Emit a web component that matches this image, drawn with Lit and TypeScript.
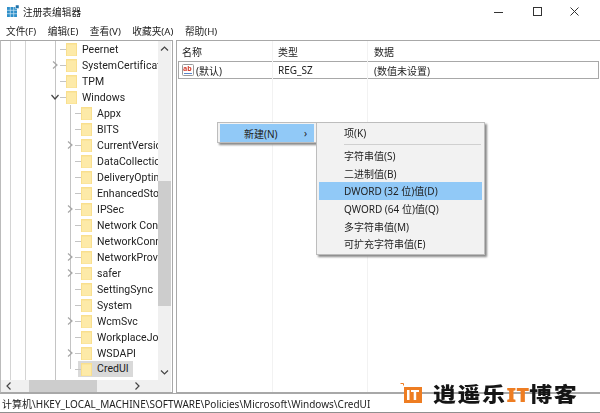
import { LitElement, html, css, svg } from "lit";
import { customElement } from "lit/decorators.js";

type Row = { t: string; lvl: number; exp?: "c" | "o"; sel?: boolean };
const rows: Row[] = [
  { t: "Peernet", lvl: 0 },
  { t: "SystemCertificates", lvl: 0, exp: "c" },
  { t: "TPM", lvl: 0 },
  { t: "Windows", lvl: 0, exp: "o" },
  { t: "Appx", lvl: 1 },
  { t: "BITS", lvl: 1 },
  { t: "CurrentVersion", lvl: 1, exp: "c" },
  { t: "DataCollection", lvl: 1 },
  { t: "DeliveryOptimization", lvl: 1 },
  { t: "EnhancedStorage", lvl: 1 },
  { t: "IPSec", lvl: 1, exp: "c" },
  { t: "Network Connections", lvl: 1 },
  { t: "NetworkConnectivity", lvl: 1 },
  { t: "NetworkProvider", lvl: 1, exp: "c" },
  { t: "safer", lvl: 1, exp: "c" },
  { t: "SettingSync", lvl: 1 },
  { t: "System", lvl: 1 },
  { t: "WcmSvc", lvl: 1, exp: "c" },
  { t: "WorkplaceJoin", lvl: 1 },
  { t: "WSDAPI", lvl: 1, exp: "c" },
  { t: "CredUI", lvl: 1, sel: true },
];

const folder = svg`<svg class="folder" width="11" height="16" viewBox="0 0 11 16"><path d="M0 2h11v13H0z" fill="#f9df8e"/><path d="M1 3.500h9v11H1z" fill="#fdeaa8"/></svg>`;

@customElement("app-root")
export class AppRoot extends LitElement {
  static styles = css`
    :host { display: block; width: 600px; height: 413px; overflow: hidden; background: #fff; position: relative;
      font-family: "Noto Sans", "Noto Sans CJK SC", sans-serif; font-size: 10px; color: #222; }
    .app { display: flex; flex-direction: column; height: 413px; filter: blur(0.35px); }
    .title { height: 23px; display: flex; align-items: center; padding-left: 7px; gap: 4px; flex: none; }
    .title .name { flex: 1; font-size: 9.700px; }
    .winbtns { display: flex; }
    .winbtns svg { display: block; width: 46px; height: 24px; }
    .menu { height: 16px; margin-bottom: 1px; display: flex; gap: 11.500px; padding-left: 6px; align-items: center; flex: none; font-size: 9.700px; }
    .panes { flex: 1; display: flex; gap: 3px; min-height: 0; }
    .tree { width: 173px; box-sizing: border-box; border: 1px solid #a8a8a8; border-left-color: #bbb; padding-right: 1px; display: grid;
      grid-template-columns: 1fr 13px; grid-template-rows: 1fr 12px; position: relative; flex: none; }
    .rows { overflow: hidden; position: relative; }
    .guide { position: absolute; width: 1px; background: #d4d4d4; }
    .g1 { left: 9px; top: 0; bottom: 0; }
    .g2 { left: 24px; top: 0; bottom: 0; }
    .g3 { left: 54px; top: 0; bottom: 0; background: #c4c4c4; }
    .g4 { left: 69px; top: 64px; height: 264px; background: #c4c4c4; }
    .row { height: 16px; display: flex; align-items: center; white-space: nowrap; position: relative; }
    .l0 { padding-left: 65px; }
    .l1 { padding-left: 80px; }
    .tick { position: absolute; height: 1px; width: 6px; background: #c4c4c4; top: 8px; }
    .l0 .tick { left: 59px; }
    .l1 .tick { left: 74px; }
    .chev { position: absolute; top: 3px; width: 10px; height: 10px; }
    .l0 .chev { left: 49px; }
    .l1 .chev { left: 64px; }
    .folder { flex: none; }
    .label { font-family: Roboto, sans-serif; font-size: 10.500px; margin-left: 4px; padding: 0 1px; line-height: 15px; letter-spacing: 0.050px; }
    .sel { align-items: stretch; }
    .sel .label { background: #d9d9d9; padding: 0 4px 0 5px; margin: 0; height: 16px; }
    .sel .folder { background: #d9d9d9; box-shadow: -3px 0 0 #d9d9d9; }
    .vs { background: #f0f0f0; display: flex; flex-direction: column; justify-content: space-between; position: relative; }
    .vthumb { position: absolute; left: 0; right: 0; top: 140px; height: 125px; background: #cdcdcd; }
    .hs { background: #f0f0f0; position: relative; display: flex; justify-content: space-between; align-items: center; padding: 0 16px 0 3px; }
    .hthumb { position: absolute; left: 28px; width: 68px; top: 0; bottom: 0; background: #cdcdcd; }
    .corner { background: #f0f0f0; }
    .arrow { display: block; position: relative; }
    .list { flex: 1; box-sizing: border-box; border: 1px solid #a8a8a8; border-right: none; position: relative; }
    .cols { display: grid; grid-template-columns: 96px 96px 1fr; height: 20px; align-items: center; }
    .cols > div { padding-left: 5px; }
    .cols.item { height: 16px; border: 1px solid #a8a8a8; margin: 0 1px; grid-template-columns: 94px 96px 1fr; }
    .name { display: flex; align-items: center; gap: 2px; }
    .cols.item .name { padding-left: 3px; }
    .vl { position: absolute; top: 0; bottom: 0; width: 1px; background: #f2f2f2; }
    .ctx { position: absolute; background: #f2f2f2; border: 1px solid #bdbdbd; box-shadow: 2px 2px 2px #8a8a8a; box-sizing: border-box; }
    .ctx1 { left: 217px; top: 122px; width: 100px; height: 21px; padding: 1px 2px; }
    .ctx1 .it { background: #91c9f7; height: 18px; display: flex; justify-content: space-between; align-items: center; padding: 0 7px 0 24px; }
    .ctx2 { left: 316px; top: 122px; width: 169px; height: 133px; padding: 1px 2px; display: flex; flex-direction: column; }
    .ctx2 .it { height: 17.700px; display: flex; align-items: center; padding-left: 25px; flex: none; }
    .ctx2 .hl { background: #91c9f7; }
    .sep { height: 1px; background: #d0d0d0; margin: 2px 1px 2px 25px; flex: none; }
    .status { height: 20px; flex: none; display: flex; align-items: center; padding-left: 2px; white-space: nowrap; border-top: 1px solid #a8a8a8; border-bottom: 1px solid #8f8f8f; box-sizing: border-box; background: #fff; }
    .logo { position: absolute; left: 400px; top: 383px; display: flex; align-items: center; gap: 11px; height: 20px; }
    .logo svg { display: block; }
    .logo-t { font-family: "Noto Sans CJK SC", sans-serif; font-weight: 900; font-size: 23px; line-height: 20px; color: #151515; letter-spacing: 1.500px; white-space: nowrap; display: inline-block; transform: scaleY(0.880); transform-origin: center; }
    .logo-t b { color: #ee7d22; font-weight: 900; font-family: "Noto Sans", sans-serif; font-size: 22px; letter-spacing: 0; }
  `;

  chev(kind: "c" | "o") {
    return html`<svg class="chev" viewBox="0 0 10 10">
      ${kind === "c"
        ? svg`<path d="M3 1.500 7 5 3 8.500" fill="none" stroke="#a6a6a6" stroke-width="1.200"/>`
        : svg`<path d="M1.500 3 5 7 8.500 3" fill="none" stroke="#444" stroke-width="1.200"/>`}
    </svg>`;
  }

  render() {
    const menu = ["文件(F)", "编辑(E)", "查看(V)", "收藏夹(A)", "帮助(H)"];
    return html`
      <div class="app">
        <div class="title">
          <svg width="12" height="13" viewBox="0 0 12 13">
            <rect x="0" y="2" width="10" height="10" fill="#2f8fc9"/>
            <path d="M0 5.300h10M0 8.700h10M3.300 2v10M6.700 2v10" stroke="#cfe8f7" stroke-width="0.700"/>
            <rect x="8.500" y="0" width="3.500" height="3.500" fill="#1d6fa8" stroke="#fff" stroke-width="0.500"/>
          </svg>
          <span class="name">注册表编辑器</span>
          <div class="winbtns">
            <svg viewBox="0 0 46 24"><path d="M18 12.500h9" stroke="#333"/></svg>
            <svg viewBox="0 0 46 24" style="margin-left:-7px"><rect x="18.500" y="7.500" width="8" height="8" fill="none" stroke="#333"/></svg>
            <svg viewBox="0 0 46 24" style="margin-left:-7px"><path d="M16.500 7.500l8 8m0-8-8 8" stroke="#333" fill="none"/></svg>
          </div>
        </div>
        <div class="menu">${menu.map((m) => html`<span>${m}</span>`)}</div>
        <div class="panes">
          <div class="tree">
            <div class="rows">
              <i class="guide g1"></i><i class="guide g2"></i><i class="guide g3"></i><i class="guide g4"></i>
              ${rows.map(
                (r) => html`<div class="row l${r.lvl} ${r.sel ? "sel" : ""}">
                  <i class="tick"></i>
                  ${r.exp ? this.chev(r.exp) : ""}
                  ${folder}<span class="label">${r.t}</span>
                </div>`
              )}
            </div>
            <div class="vs">
              <div class="vthumb"></div>
              <svg class="arrow" width="13" height="16" viewBox="0 0 13 16"><path d="M3 9.500 6.500 6l3.500 3.500" fill="none" stroke="#444" stroke-width="1.200"/></svg>
              <svg class="arrow" width="13" height="16" viewBox="0 0 13 16"><path d="M3 6.500 6.500 10l3.500-3.500" fill="none" stroke="#444" stroke-width="1.200"/></svg>
            </div>
            <div class="hs">
              <div class="hthumb"></div>
              <svg class="arrow" width="10" height="12" viewBox="0 0 10 12"><path d="M6.500 2.500 3 6l3.500 3.500" fill="none" stroke="#444" stroke-width="1.200"/></svg>
              <svg class="arrow" width="10" height="12" viewBox="0 0 10 12"><path d="M3.500 2.500 7 6 3.500 9.500" fill="none" stroke="#444" stroke-width="1.200"/></svg>
            </div>
            <div class="corner"></div>
          </div>
          <div class="list">
            <i class="vl" style="left:95px"></i><i class="vl" style="left:190px"></i>
            <div class="cols"><div>名称</div><div>类型</div><div>数据</div></div>
            <div class="cols item">
              <div class="name">
                <svg width="12" height="12" viewBox="0 0 12 12"><rect x="0.500" y="0.500" width="11" height="11" rx="1" fill="#fff" stroke="#999"/><text x="1" y="7" font-size="7" font-weight="700" fill="#d33c2c" font-family="Noto Sans">ab</text><path d="M2 9.500h8" stroke="#5a86c8"/></svg>
                <span>(默认)</span>
              </div>
              <div>REG_SZ</div>
              <div>(数值未设置)</div>
            </div>
          </div>
        </div>
        <div class="status">计算机\\HKEY_LOCAL_MACHINE\\SOFTWARE\\Policies\\Microsoft\\Windows\\CredUI</div>
      </div>
      <div class="logo">
        <svg width="22" height="20" viewBox="0 0 22 20"><path d="M4 4h18v16H4z" fill="#ee7d22"/><path d="M0.500 0.500h3v2" fill="none" stroke="#ee7d22"/><path d="M7 7h2.500v10H7zM11 7h8v2h-2.800v8h-2.500V9H11z" fill="#fff"/></svg>
        <span class="logo-t">逍遥乐<b>IT</b>博客</span>
      </div>
      <div class="ctx ctx1"><div class="it"><span>新建(N)</span><span>›</span></div></div>
      <div class="ctx ctx2">
        <div class="it">项(K)</div>
        <div class="sep"></div>
        <div class="it">字符串值(S)</div>
        <div class="it">二进制值(B)</div>
        <div class="it hl">DWORD (32 位)值(D)</div>
        <div class="it">QWORD (64 位)值(Q)</div>
        <div class="it">多字符串值(M)</div>
        <div class="it">可扩充字符串值(E)</div>
      </div>
    `;
  }
}
